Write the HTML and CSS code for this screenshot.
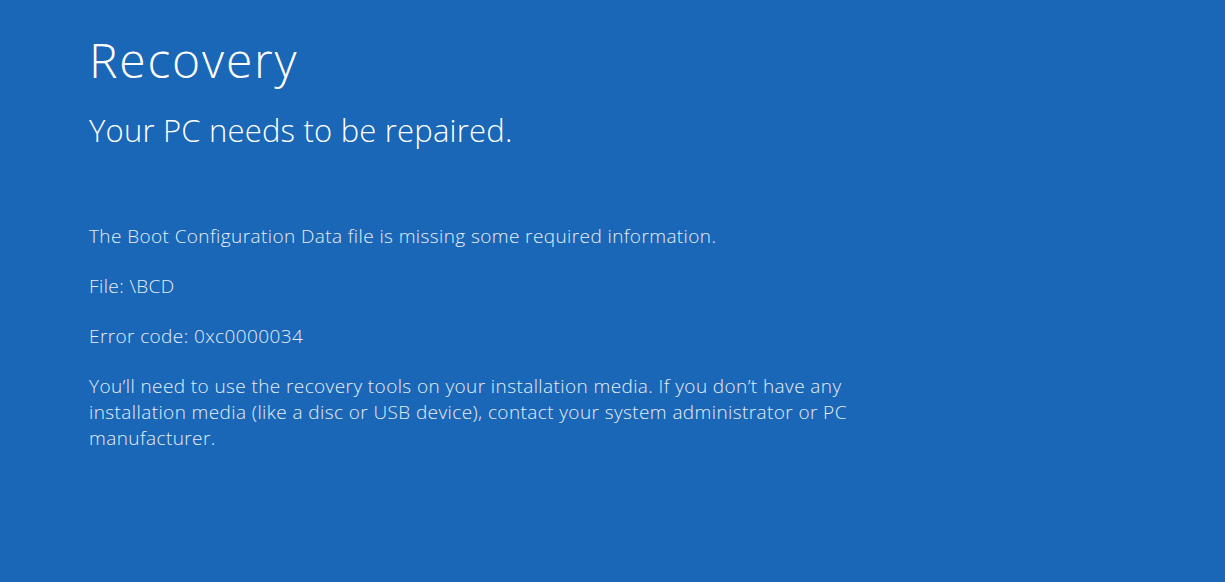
FILE: index.html
```html
<!DOCTYPE html>
<html>
<head>
	<title>Recovery</title>
	<meta charset="utf-8">
	<link rel="stylesheet" href="styles.css">
</head>

<body>

<div class="recovery">
	<h1 class="recovery-title">Recovery</h1>
	<h2 class="recovery-subtitle">Your PC needs to be repaired.</h2>

	<div class="recovery-details">
		<p>The Boot Configuration Data file is missing some required information.</p>
		<p>File: \BCD</p>
		<p>Error code: 0xc0000034</p>
		<p>You’ll need to use the recovery tools on your installation media. If you don’t have any installation media (like a disc or USB device), contact your system administrator or PC manufacturer.</p>
	</div>
</div>

</body>
</html>
```

FILE: styles.css
```css
html, body {
	margin: 0;
	height: 100%;
}
body {
	background: #1a66b7;
	color: #fff;
	font-family: "Open Sans", "Noto Sans", sans-serif;
	font-weight: 300;
}
.recovery {
	padding: 28px 0 0 89px;
}
.recovery-title {
	margin: 0;
	font-size: 48px;
	font-weight: 300;
	line-height: 64px;
	letter-spacing: 1.8px;
}
.recovery-subtitle {
	margin: 16px 0 0;
	font-size: 31px;
	font-weight: 300;
	line-height: 44px;
	letter-spacing: 0.2px;
}
.recovery-details {
	width: 780px;
	margin-top: 71px;
	font-size: 19px;
	line-height: 26px;
	letter-spacing: 0.4px;
	color: #e6eef8;
}
.recovery-details p {
	margin: 0 0 24px;
}
```
